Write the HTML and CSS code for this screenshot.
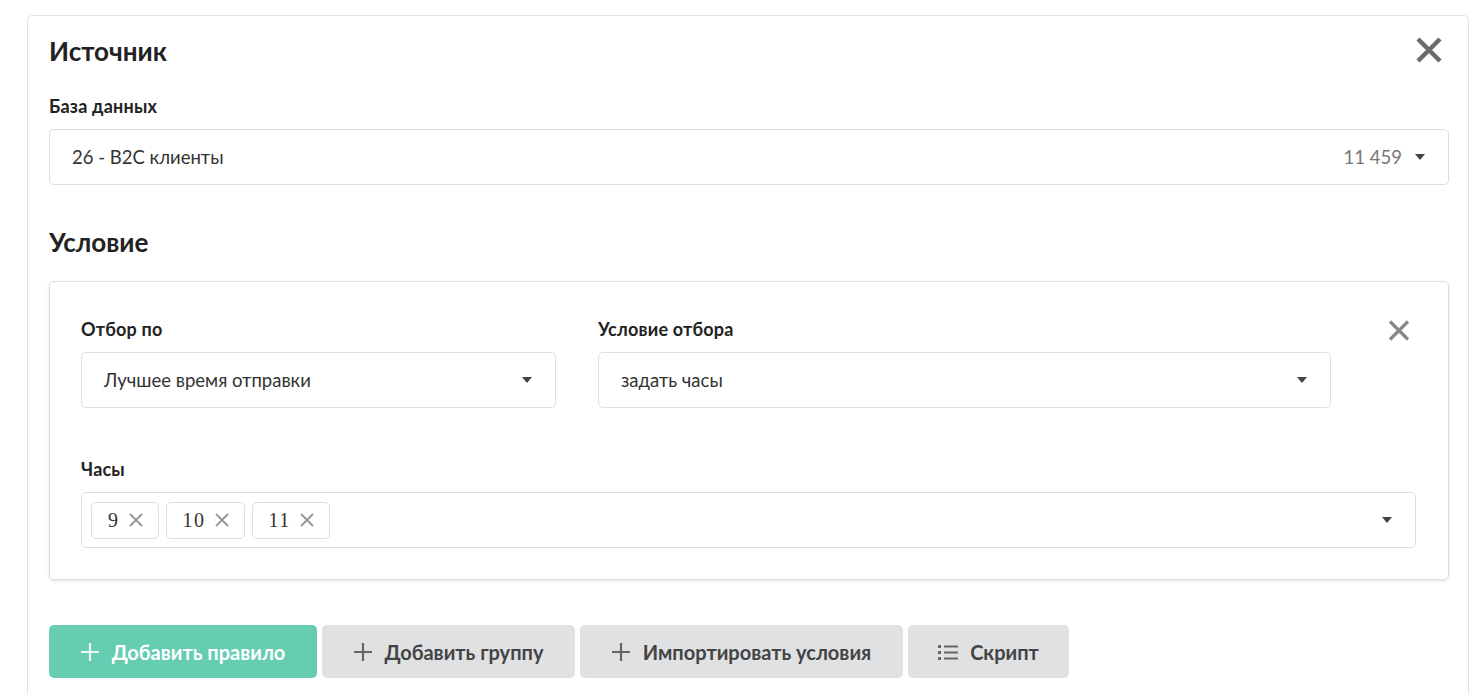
FILE: index.html
```html
<!DOCTYPE html>
<html lang="ru">
<head>
  <meta charset="UTF-8">
  <title>Источник</title>
  <link rel="stylesheet" href="styles.css">
</head>
<body>
<div class="panel">
  <div class="panel-head">
    <h2>Источник</h2>
    <button class="close big" aria-label="Закрыть">
      <svg width="28" height="26" viewBox="0 0 28 26"><path d="M3 2 L25 24 M25 2 L3 24" stroke="#6b6b6b" stroke-width="4.5"/></svg>
    </button>
  </div>

  <label class="label">База данных</label>
  <div class="select">
    <span class="value">26 - B2C клиенты</span>
    <span class="count">11 459</span>
    <span class="caret"></span>
  </div>

  <h2 class="section">Условие</h2>

  <div class="rule">
    <div class="rule-row">
      <div class="field field-by">
        <label class="label">Отбор по</label>
        <div class="select">
          <span class="value">Лучшее время отправки</span>
          <span class="caret"></span>
        </div>
      </div>
      <div class="field field-cond">
        <label class="label">Условие отбора</label>
        <div class="select">
          <span class="value">задать часы</span>
          <span class="caret"></span>
        </div>
      </div>
      <button class="close small" aria-label="Удалить">
        <svg width="22" height="21" viewBox="0 0 22 21"><path d="M2 1.5 L20 19.5 M20 1.5 L2 19.5" stroke="#888" stroke-width="3.2"/></svg>
      </button>
    </div>

    <label class="label">Часы</label>
    <div class="select multi">
      <span class="tag"><span class="num">9</span><svg class="x" width="14" height="14" viewBox="0 0 14 14"><path d="M1 1 L13 13 M13 1 L1 13" stroke="#999" stroke-width="2"/></svg></span>
      <span class="tag"><span class="num">10</span><svg class="x" width="14" height="14" viewBox="0 0 14 14"><path d="M1 1 L13 13 M13 1 L1 13" stroke="#999" stroke-width="2"/></svg></span>
      <span class="tag"><span class="num">11</span><svg class="x" width="14" height="14" viewBox="0 0 14 14"><path d="M1 1 L13 13 M13 1 L1 13" stroke="#999" stroke-width="2"/></svg></span>
      <span class="caret"></span>
    </div>
  </div>

  <div class="actions">
    <button class="btn primary"><svg class="plus" width="18" height="18" viewBox="0 0 18 18"><path d="M9 0 V18 M0 9 H18" stroke="#e6f8f2" stroke-width="2.2"/></svg>Добавить правило</button>
    <button class="btn"><svg class="plus" width="18" height="18" viewBox="0 0 18 18"><path d="M9 0 V18 M0 9 H18" stroke="#666" stroke-width="2.2"/></svg>Добавить группу</button>
    <button class="btn wide"><svg class="plus" width="18" height="18" viewBox="0 0 18 18"><path d="M9 0 V18 M0 9 H18" stroke="#666" stroke-width="2.2"/></svg>Импортировать условия</button>
    <button class="btn script">
      <svg width="20" height="16" viewBox="0 0 20 16"><g fill="#666"><rect x="0" y="1" width="3" height="3"/><rect x="0" y="7" width="3" height="3"/><rect x="0" y="13" width="3" height="3"/><rect x="6" y="1.5" width="14" height="2"/><rect x="6" y="7.5" width="14" height="2"/><rect x="6" y="13.5" width="14" height="2"/></g></svg>
      Скрипт
    </button>
  </div>
</div>
</body>
</html>
```

FILE: styles.css
```css
body { margin: 0; background: #fff; font-family: Lato, "Open Sans", sans-serif; color: #222; overflow: hidden; }
.panel { margin: 15px 0 0 27px; border: 1px solid #e2e2e2; border-radius: 5px; padding: 18px 19px 40px 21px; height: 700px; box-sizing: border-box; }
.panel-head { display: flex; justify-content: space-between; align-items: center; height: 34px; }
h2 { margin: 0; font-size: 26px; line-height: 30px; font-weight: 700; color: #222; }
.close { border: none; background: none; padding: 0; cursor: pointer; display: flex; }
.close.big { margin-right: 6px; margin-top: -2px; }
.label { display: block; font-size: 18px; line-height: 20px; letter-spacing: 0.2px; font-weight: 700; color: #222; margin: 0 0 13px; }
.panel-head + .label { margin-top: 28px; }
.select { display: flex; align-items: center; height: 56px; box-sizing: border-box; border: 1px solid #dedede; border-radius: 5px; padding: 0 23px 0 22px; font-size: 18.5px; color: #333; }
.select .value { flex: 1; }
.select .count { color: #777; margin-right: 13px; }
.caret { width: 0; height: 0; border-left: 5px solid transparent; border-right: 5px solid transparent; border-top: 6px solid #444; }
.section { margin: 42px 0 24px; }
.rule { border: 1px solid #dedede; border-radius: 5px; box-shadow: 0 1px 3px rgba(0,0,0,0.12); padding: 37px 32px 31px 31px; }
.rule-row { display: flex; align-items: flex-start; margin-bottom: 51px; }
.field-by { width: 475px; margin-right: 42px; }
.field-cond { width: 733px; }
.close.small { margin: 0 6px 0 auto; margin-top: 1px; }
.multi { padding-left: 9px; gap: 7px; }
.multi .caret { margin-left: auto; }
.tag { display: flex; align-items: center; height: 37px; box-sizing: border-box; border: 1px solid #dedede; border-radius: 5px; padding: 0 15px 0 16px; font-family: "Liberation Serif", serif; font-size: 20px; color: #333; }
.tag .num { letter-spacing: 1.5px; }
.tag .x { margin-left: 9px; }
.actions { display: flex; gap: 5px; margin-top: 45px; }
.btn { width: 253px; height: 53px; border: none; border-radius: 5px; background: #e0e1e3; color: #444; font-family: Lato, sans-serif; font-weight: 700; font-size: 20px; display: flex; align-items: center; justify-content: center; gap: 13px; padding: 0; }
.btn.primary { background: #66cdb0; color: #fff; width: 268px; }
.btn.wide { width: 323px; }
.btn.script { width: 161px; gap: 12px; }
```
